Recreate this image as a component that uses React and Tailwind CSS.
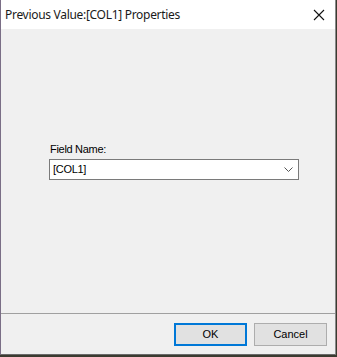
export default function App() {
  return (
    <div className="w-[337px] h-[357px] bg-[#3b3b30] overflow-hidden">
      <div className="w-[336px] h-[355px] bg-[#f0f0f0] flex flex-col border-l border-[#7a6e86] border-r border-r-[#8a8a8a] border-b border-b-[#6a6a6a]">
        {/* Title bar */}
        <div className="h-[29px] bg-white flex items-center justify-between pl-[4px] pr-[10px] shrink-0">
          <span
            className="text-[12px] text-[#1a1a1a] tracking-[-0.3px]"
            style={{ fontFamily: '"Segoe UI", "Noto Sans", Roboto, sans-serif' }}
          >
            Previous Value:[COL1] Properties
          </span>
          <svg width="12" height="12" viewBox="0 0 12 12" className="mt-[1px]">
            <path d="M1 1 L11 11 M11 1 L1 11" stroke="#111" strokeWidth="1.1" fill="none" />
          </svg>
        </div>

        {/* Body */}
        <div
          className="flex-1 pl-[48px] pr-[37px] pt-[114px] text-[11px] text-black tracking-[-0.3px]"
          style={{ fontFamily: '"Liberation Sans", Arial, sans-serif' }}
        >
          <div className="leading-[13px] mb-[3px] ml-[1px]">Field Name:</div>
          <div className="h-[21px] w-[250px] bg-white border border-[#7a7a7a] flex items-center justify-between pl-[3px] pr-[5px]">
            <span>[COL1]</span>
            <svg width="9" height="5" viewBox="0 0 9 5">
              <path d="M0.5 0.5 L4.5 4.5 L8.5 0.5" stroke="#555" strokeWidth="1" fill="none" />
            </svg>
          </div>
        </div>

        {/* Footer */}
        <div
          className="h-[41px] shrink-0 border-t border-[#a0a0a0] flex items-start justify-end gap-[7px] pt-[9px] pr-[8px] text-[11px] text-black"
          style={{ fontFamily: '"Liberation Sans", Arial, sans-serif' }}
        >
          <button className="w-[73px] h-[23px] bg-[#e1e1e1] border-2 border-[#0078d7] flex items-center justify-center">
            OK
          </button>
          <button className="w-[73px] h-[23px] bg-[#e1e1e1] border border-[#adadad] flex items-center justify-center">
            Cancel
          </button>
        </div>
      </div>
    </div>
  );
}
